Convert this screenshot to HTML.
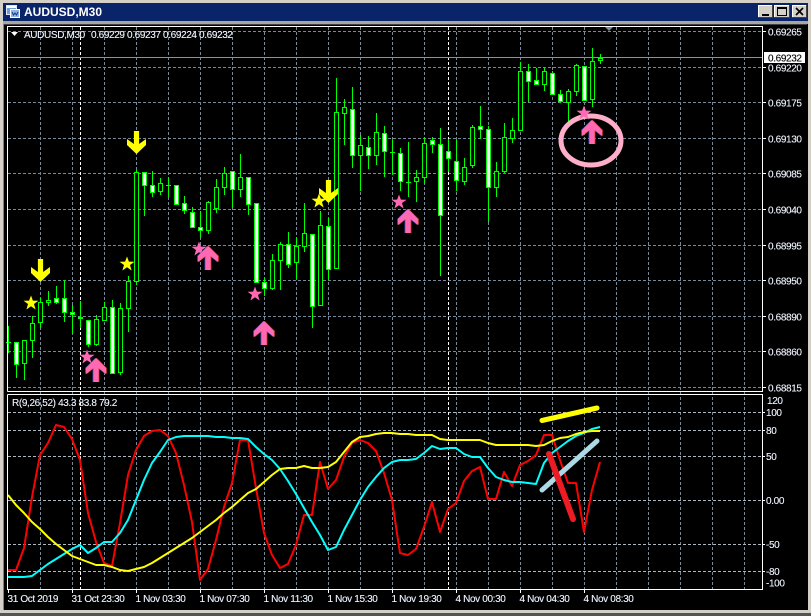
<!DOCTYPE html>
<html><head><meta charset="utf-8"><title>AUDUSD,M30</title>
<style>
html,body{margin:0;padding:0;background:#000;width:811px;height:616px;overflow:hidden}
svg{display:block}
text{font-family:"Liberation Sans",sans-serif;font-size:10px;letter-spacing:-.36px;fill:#f4f8ff;stroke:#dfe8ff;stroke-width:.12px}
</style></head><body>
<svg width="811" height="616" viewBox="0 0 811 616" xmlns="http://www.w3.org/2000/svg">
<defs>
<polygon id="up" points="0,0 10,10 10,16 2.6,10 2.6,24 -2.6,24 -2.6,10 -10,16 -10,10"/>
<polygon id="down" points="-2.6,0 2.6,0 2.6,13 9.5,8 9.5,14 0,23 -9.5,14 -9.5,8 -2.6,13"/>
<polygon id="star" points="0,-7.5 1.9,-2.4 7.5,-2.3 3,1 4.6,6.5 0,3.3 -4.6,6.5 -3,1 -7.5,-2.3 -1.9,-2.4"/>
</defs>
<!-- window frame -->
<rect width="811" height="616" fill="#d4d0c8"/>
<rect x="0" y="613" width="811" height="3" fill="#555"/>
<rect x="3" y="3" width="805" height="18" fill="#0a246a"/>
<rect x="3" y="21" width="805" height="3" fill="#a8a6a0"/>
<rect x="3" y="24" width="805" height="586" fill="#000"/>
<rect x="3" y="24" width="1" height="586" fill="#808080"/>
<rect x="4" y="24" width="803" height="1" fill="#404040"/>
<!-- title icon -->
<rect x="6.5" y="5.5" width="10" height="9" fill="#6f9fd8" stroke="#dfe8f5"/>
<rect x="7" y="6" width="9" height="2" fill="#fff"/>
<rect x="10.5" y="9.5" width="9" height="8" fill="#8fb6e6" stroke="#fff"/>
<path d="M12 12l1.5 3 1.5-2 1.5 2 1.5-3" fill="none" stroke="#1a3a7a"/>
<text x="24" y="16" style="font-size:12px;font-weight:bold;fill:#fff;letter-spacing:0;stroke:none">AUDUSD,M30</text>
<!-- buttons -->
<g>
<rect x="758" y="5" width="15" height="13" fill="#d4d0c8"/><path d="M758.5 18V5.5H773" fill="none" stroke="#fff"/><path d="M758 17.5H772.5V5" fill="none" stroke="#404040"/>
<rect x="762" y="14" width="7" height="2" fill="#000"/>
<rect x="774" y="5" width="16" height="13" fill="#d4d0c8"/><path d="M774.5 18V5.5H790" fill="none" stroke="#fff"/><path d="M774 17.5H789.5V5" fill="none" stroke="#404040"/>
<rect x="777.5" y="7.5" width="9" height="8" fill="none" stroke="#000"/><rect x="777" y="7" width="10" height="2" fill="#000"/>
<rect x="792" y="5" width="15" height="13" fill="#d4d0c8"/><path d="M792.5 18V5.5H807" fill="none" stroke="#fff"/><path d="M792 17.5H806.5V5" fill="none" stroke="#404040"/>
<path d="M796 8l7 7M803 8l-7 7" stroke="#000" stroke-width="1.7"/>
</g>
<!-- grid -->
<path d="M40.5 27V589M72.5 27V589M104.5 27V589M136.5 27V589M168.5 27V589M200.5 27V589M232.5 27V589M264.5 27V589M296.5 27V589M328.5 27V589M360.5 27V589M392.5 27V589M424.5 27V589M456.5 27V589M488.5 27V589M520.5 27V589M552.5 27V589M584.5 27V589M616.5 27V589M648.5 27V589M680.5 27V589M712.5 27V589M744.5 27V589" stroke="#778899" stroke-dasharray="3 2" fill="none"/>
<path d="M8 31.5H762M8 67.5H762M8 102.5H762M8 138.5H762M8 173.5H762M8 209.5H762M8 245.5H762M8 280.5H762M8 316.5H762M8 351.5H762M8 387.5H762" stroke="#778899" stroke-dasharray="3 2" fill="none"/>
<path d="M8 412.5H762M8 430.5H762M8 456.5H762M8 500.5H762M8 544.5H762M8 571.5H762" stroke="#aeb6c0" stroke-dasharray="3 2" fill="none"/>
<path d="M80.5 27V589M448.5 27V589" stroke="#fff" stroke-dasharray="3 2" fill="none"/>
<path d="M8 57.5H762" stroke="#8a9199"/>
<!-- wicks -->
<path fill="none" stroke="#00ff00" d="M8.5 326V353M16.5 342V378M24.5 340V380M32.5 316V358M40.5 298V328M48.5 291V306M56.5 286V304M64.5 280V322M72.5 305V334M80.5 301V328M88.5 320V347M96.5 315V346M104.5 302V320M112.5 300V373M120.5 303V375M128.5 276V332M136.5 170V285M144.5 172V216M152.5 171V197M160.5 178V195M168.5 177V197M176.5 185V205M184.5 196V214M192.5 207V227M200.5 211V238M208.5 201V234M216.5 179V213M224.5 167V195M232.5 171V208M240.5 154V197M248.5 177V215M256.5 203V282M264.5 277V296M272.5 254V290M280.5 242V290M288.5 232V268M296.5 237V279M304.5 203V252M312.5 234V328M320.5 211V306M328.5 218V280M336.5 78V268M344.5 99V145M352.5 87V168M360.5 135V191M368.5 136V169M376.5 113V165M384.5 126V177M392.5 140V175M400.5 148V191M408.5 142V197M416.5 170V202M424.5 137V184M432.5 137V153M440.5 128V276M448.5 139V172M456.5 140V191M464.5 158V185M472.5 125V168M480.5 106V139M488.5 126V222M496.5 162V197M504.5 123V173M512.5 118V143M520.5 62V130M528.5 64V102M536.5 68V84M544.5 68V91M552.5 71V94M560.5 90V103M568.5 89V122M576.5 64V96M584.5 66V100M592.5 48V107M600.5 54V64M6 342.5H11M166 185.5H171M390 152.5H395M406 182.5H411"/>
<!-- outlined bodies -->
<path fill="#000" stroke="#00ff00" d="M22.5 340.5h4v23h-4zM30.5 323.5h4v17h-4zM38.5 302.5h4v20h-4zM46.5 300.5h4v2h-4zM94.5 319.5h4v25h-4zM102.5 307.5h4v13h-4zM118.5 308.5h4v64h-4zM126.5 281.5h4v27h-4zM134.5 172.5h4v109h-4zM158.5 183.5h4v8h-4zM206.5 202.5h4v28h-4zM214.5 187.5h4v21h-4zM222.5 173.5h4v14h-4zM238.5 177.5h4v12h-4zM270.5 260.5h4v28h-4zM278.5 244.5h4v16h-4zM294.5 246.5h4v16h-4zM302.5 233.5h4v13h-4zM318.5 225.5h4v80h-4zM334.5 112.5h4v156h-4zM342.5 107.5h4v6h-4zM358.5 145.5h4v10h-4zM374.5 132.5h4v23h-4zM414.5 177.5h4v4h-4zM422.5 143.5h4v34h-4zM462.5 167.5h4v14h-4zM470.5 127.5h4v38h-4zM494.5 171.5h4v16h-4zM502.5 137.5h4v34h-4zM510.5 130.5h4v8h-4zM518.5 71.5h4v59h-4zM542.5 71.5h4v13h-4zM566.5 91.5h4v11h-4zM574.5 65.5h4v26h-4zM590.5 61.5h4v38h-4zM598.5 58.5h4v2h-4z"/>
<!-- white bodies -->
<path fill="#fff" stroke="#00ff00" d="M14.5 342.5h4v22h-4zM54.5 298.5h4v4h-4zM62.5 298.5h4v14h-4zM70.5 312.5h4v2h-4zM78.5 317.5h4v1h-4zM86.5 320.5h4v24h-4zM110.5 307.5h4v66h-4zM142.5 172.5h4v13h-4zM150.5 185.5h4v7h-4zM174.5 185.5h4v19h-4zM182.5 203.5h4v7h-4zM190.5 212.5h4v15h-4zM198.5 227.5h4v3h-4zM230.5 171.5h4v18h-4zM246.5 177.5h4v27h-4zM254.5 203.5h4v79h-4zM262.5 282.5h4v6h-4zM286.5 244.5h4v20h-4zM310.5 234.5h4v72h-4zM326.5 226.5h4v43h-4zM350.5 109.5h4v46h-4zM366.5 147.5h4v8h-4zM382.5 133.5h4v18h-4zM398.5 153.5h4v28h-4zM430.5 140.5h4v4h-4zM438.5 144.5h4v71h-4zM446.5 151.5h4v7h-4zM454.5 161.5h4v19h-4zM478.5 126.5h4v3h-4zM486.5 129.5h4v58h-4zM526.5 71.5h4v10h-4zM534.5 80.5h4v4h-4zM550.5 73.5h4v21h-4zM558.5 94.5h4v7h-4zM582.5 66.5h4v34h-4z"/>
<!-- indicator lines -->
<g fill="none" stroke-width="2" stroke-linejoin="round">
<polyline stroke="#ff0000" points="8,570 16,570 24,548 32,497 40,455 48,443 56,425 64,427 72,439 80,460 88,513 96,542 104,563 112,566 120,523 128,475 136,450 144,436 152,431 160,430 168,436 176,453 184,485 192,522 200,580 208,569 216,540 224,507 232,483 240,440 248,440 256,488 264,533 272,555 280,568 288,564 296,545 304,515 312,515 320,462 328,489 336,480 344,457 352,443 360,440 368,443 376,451 384,473 392,500 400,553 408,555 416,549 424,527 432,502 440,532 448,509 456,503 464,481 472,471 480,467 488,499 496,499 504,472 512,486 520,465 528,461 536,455 544,435 552,435 560,460 568,483 576,483 584,532 592,490 600,462"/>
<polyline stroke="#00ffff" points="8,577 16,577 24,577 32,576 40,570 48,564 56,559 64,554 72,549 80,545 88,553 96,548 104,542 112,542 120,533 128,520 136,500 144,480 152,463 160,452 168,440 176,437 184,436 192,436 200,436 208,436 216,437 224,437 232,438 240,438 248,439 256,447 264,454 272,460 280,469 288,481 296,494 304,508 312,522 320,535 328,550 336,547 344,530 352,515 360,500 368,487 376,477 384,468 392,462 400,460 408,460 416,459 424,453 432,446 440,449 448,448 456,448 464,454 472,457 480,457 488,468 496,477 504,480 512,482 520,482 528,483 536,484 544,463 552,453 560,447 568,441 576,436 584,433 592,429 600,427"/>
<polyline stroke="#ffff00" points="8,495 16,505 24,513 32,522 40,529 48,537 56,544 64,550 72,556 80,559 88,562 96,565 104,565 112,567 120,570 128,571 136,569 144,567 152,563 160,558 168,553 176,548 184,543 192,538 200,532 208,526 216,520 224,513 232,507 240,500 248,493 256,489 264,482 272,475 280,469 288,468 296,468 304,466 312,468 320,468 328,467 336,462 344,452 352,442 360,437 368,436 376,434 384,433 392,433 400,434 408,434 416,435 424,435 432,435 440,439 448,440 456,440 464,440 472,440 480,440 488,443 496,445 504,445 512,445 520,445 528,445 536,446 544,445 552,441 560,438 568,437 576,434 584,432 592,431 600,431"/>
</g>
<!-- trend lines -->
<g stroke-linecap="round" fill="none">
<path d="M542 420.5L597 408" stroke="#ffff00" stroke-width="5"/>
<path d="M542 490L597 441" stroke="#add8e6" stroke-width="5"/>
<path d="M549 454L573 519" stroke="#ed1c24" stroke-width="6"/>
</g>
<!-- circle -->
<ellipse cx="591" cy="140.5" rx="30" ry="24.5" fill="none" stroke="#ffaec9" stroke-width="5"/>
<!-- stars -->
<g fill="#ffff00">
<use href="#star" x="31" y="303"/><use href="#star" x="127" y="264"/><use href="#star" x="319" y="201"/>
</g>
<g fill="#ff69b4">
<use href="#star" x="87" y="357"/><use href="#star" x="199" y="249"/><use href="#star" x="255" y="294"/><use href="#star" x="399" y="202"/><use href="#star" x="584" y="113"/>
</g>
<!-- yellow arrows -->
<g fill="#ffff00">
<use href="#down" x="40.5" y="259"/><use href="#down" x="136.5" y="131"/><use href="#down" x="328.5" y="180"/>
</g>
<!-- pink arrows -->
<g fill="#5a50d8">
<use href="#up" x="95.2" y="358"/><use href="#up" x="207.2" y="246"/><use href="#up" x="263.2" y="321"/><use href="#up" x="407.2" y="209"/><use href="#up" x="591.2" y="120"/>
</g>
<g fill="#d8402a">
<use href="#up" x="96.8" y="358"/><use href="#up" x="208.8" y="246"/><use href="#up" x="264.8" y="321"/><use href="#up" x="408.8" y="209"/><use href="#up" x="592.8" y="120"/>
</g>
<g fill="#ff69b4">
<use href="#up" x="96" y="358"/><use href="#up" x="208" y="246"/><use href="#up" x="264" y="321"/><use href="#up" x="408" y="209"/><use href="#up" x="592" y="120"/>
</g>
<!-- frames -->
<path d="M7.5 391.5V26.5H762.5V391.5H7.5M7.5 394.5H762.5V589.5H7.5V394.5" fill="none" stroke="#fff"/>
<polygon points="605,27 613,27 609,31" fill="#778899"/>
<polygon points="11,32 18,32 14.5,36" fill="#fff"/>
<!-- tick marks -->
<path d="M762 31.5H766M762 67.5H766M762 102.5H766M762 138.5H766M762 173.5H766M762 209.5H766M762 245.5H766M762 280.5H766M762 316.5H766M762 351.5H766M762 387.5H766M762 412.5H765M762 430.5H765M762 456.5H765M762 500.5H765M762 544.5H765M762 571.5H765M8.5 589V593M72.5 589V593M136.5 589V593M200.5 589V593M264.5 589V593M328.5 589V593M392.5 589V593M456.5 589V593M520.5 589V593M584.5 589V593" stroke="#fff" fill="none"/>
<!-- price labels -->
<text x="768" y="35.5">0.69265</text>
<text x="768" y="71.5">0.69220</text>
<text x="768" y="106.5">0.69175</text>
<text x="768" y="142.5">0.69130</text>
<text x="768" y="177.5">0.69085</text>
<text x="768" y="213.5">0.69040</text>
<text x="768" y="249.5">0.68995</text>
<text x="768" y="284.5">0.68950</text>
<text x="768" y="320.5">0.68890</text>
<text x="768" y="355.5">0.68860</text>
<text x="768" y="391.5">0.68815</text>
<rect x="764" y="52" width="41" height="11" fill="#fff"/>
<text x="768" y="61.5" style="fill:#000;stroke:#000">0.69232</text>
<!-- header text -->
<text x="24" y="38">AUDUSD,M30</text>
<text x="91" y="38">0.69229</text><text x="127" y="38">0.69237</text><text x="163" y="38">0.69224</text><text x="199" y="38">0.69232</text>
<text x="12" y="406">R(9,26,52) 43.3 83.8 79.2</text>
<!-- indicator labels -->
<text x="767" y="404">120</text>
<text x="766" y="416">100</text>
<text x="766" y="434">80</text>
<text x="766" y="460">50</text>
<text x="766" y="504">0.00</text>
<text x="766" y="548">-50</text>
<text x="766" y="575">-80</text>
<text x="766" y="586.5">-100</text>
<!-- dates -->
<text x="7.5" y="602">31 Oct 2019</text>
<text x="71.5" y="602">31 Oct 23:30</text>
<text x="135.5" y="602">1 Nov 03:30</text>
<text x="199.5" y="602">1 Nov 07:30</text>
<text x="263.5" y="602">1 Nov 11:30</text>
<text x="327.5" y="602">1 Nov 15:30</text>
<text x="391.5" y="602">1 Nov 19:30</text>
<text x="455.5" y="602">4 Nov 00:30</text>
<text x="519.5" y="602">4 Nov 04:30</text>
<text x="583.5" y="602">4 Nov 08:30</text>
</svg>
</body></html>
